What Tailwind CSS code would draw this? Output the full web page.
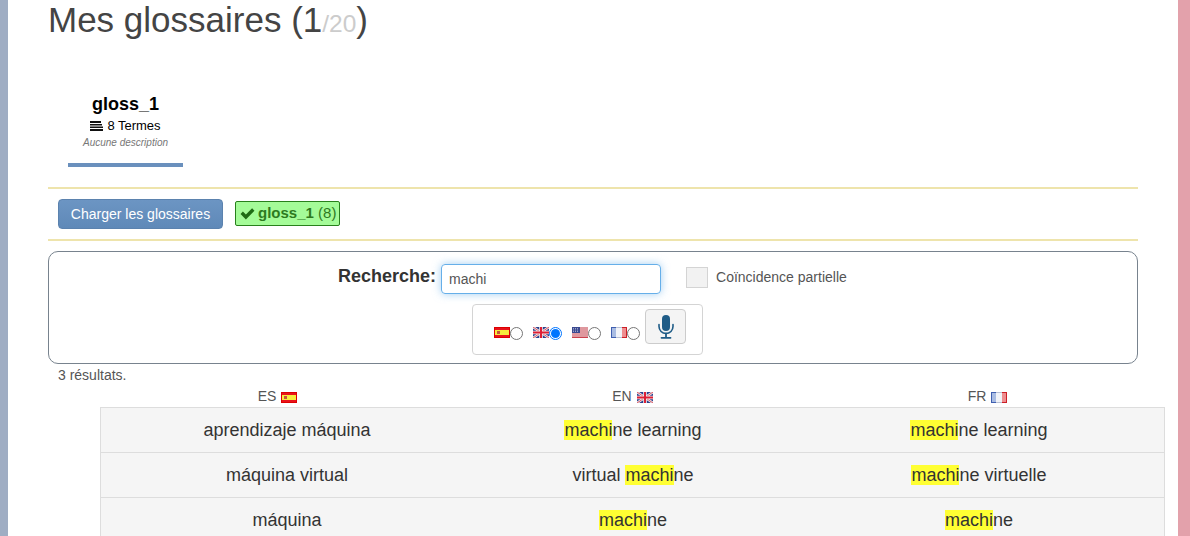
<!DOCTYPE html>
<html lang="fr">
<head>
    <meta charset="UTF-8">
    <title>Mes glossaires</title>
    <script src="https://cdn.jsdelivr.net/npm/@tailwindcss/browser@4"></script>
</head>
<body class="h-[536px] overflow-hidden bg-white font-['Liberation_Sans',Arial,sans-serif] text-[#333]">
    <svg class="hidden">
        <symbol id="flag-es" viewBox="0 0 16 11"><rect width="16" height="11" fill="#e8131b"/><rect y="3" width="16" height="5" fill="#f7ec3c"/><rect x="3" y="4" width="3" height="3" fill="#c8503c"/><rect x=".5" y=".5" width="15" height="10" fill="none" stroke="#d00" stroke-width="1"/></symbol>
        <symbol id="flag-gb" viewBox="0 0 16 11"><rect width="16" height="11" fill="#2b3f8c"/><path d="M0 0L16 11M16 0L0 11" stroke="#eee" stroke-width="2.4"/><path d="M0 0L16 11M16 0L0 11" stroke="#d8283c" stroke-width=".8"/><path d="M8 0V11M0 5.500H16" stroke="#eee" stroke-width="3.600"/><path d="M8 0V11M0 5.500H16" stroke="#dd1f35" stroke-width="2"/></symbol>
        <symbol id="flag-us" viewBox="0 0 16 11"><rect width="16" height="11" fill="#f4f0f0"/><path d="M0 1H16M0 3H16M0 5H16M0 7H16M0 9H16" stroke="#c9404c" stroke-width="1"/><path d="M0 10.500H16" stroke="#c9404c" stroke-width="1"/><rect width="8" height="6" fill="#3b4a90"/><path d="M1 1.500H7M1 3H7M1 4.500H7" stroke="#dde" stroke-width=".6" stroke-dasharray="1 1"/></symbol>
        <symbol id="flag-fr" viewBox="0 0 16 11"><rect width="16" height="11" fill="#f1f3f8"/><rect width="5" height="11" fill="#3f5fb0"/><rect x="1" y="1" width="4" height="9" fill="#a9bce2"/><rect x="11" width="5" height="11" fill="#cc1f27"/><rect x="11" y="1" width="4" height="9" fill="#ee8e90"/><path d="M5 .5H11M5 10.500H11" stroke="#b8c0d4" stroke-width="1"/></symbol>
    </svg>
    <div class="flex h-full">
        <div class="w-2 shrink-0 bg-[#9fadc3]"></div>
        <main class="relative w-[1170px] shrink-0 overflow-hidden pl-10 pr-10">
            <h1 class="mt-[-2px] h-[44px] text-[35px] leading-[44px] font-normal text-[#444]">Mes glossaires (1<span class="text-[24.5px] text-[#ccc]">/20</span>)</h1>

            <div class="mt-[52px] ml-5 flex h-[73px] w-[115px] flex-col items-center border-b-4 border-[#6a90bd]">
                <div class="text-[18px] leading-[20px] font-bold text-black">gloss_1</div>
                <div class="mt-[3px] flex items-center gap-1 text-[13px] leading-[17px] text-black">
                    <svg class="h-[10px] w-[13px]" viewBox="0 0 13 10"><path d="M0 0h11v2H0zM0 3h12v1.500H0zM0 5.500h13V7H0zM0 8h13v2H0z" fill="#111"/></svg>
                    8 Termes
                </div>
                <div class="mt-[3px] text-[10px] leading-[12px] text-[#777] italic">Aucune description</div>
            </div>

            <div class="mt-[20px] flex h-[54px] items-center border-y-2 border-[#eee4ac] pl-[10px]">
                <button class="h-[30px] w-[165px] rounded-[4px] border border-[#5b82ae] bg-gradient-to-b from-[#6c95c3] to-[#5f89b8] text-[14px] text-white">Charger les glossaires</button>
                <div class="mt-[-2px] ml-3 flex h-[25px] w-[105px] items-center rounded-[2px] border border-[#28801c] bg-[#a4fb98] pl-1 text-[15px] text-[#2d7a1f]">
                    <svg class="mr-[3px] h-[13px] w-[15px]" viewBox="0 0 14 12"><path d="M.5 6.500L2.700 4.200L5.500 7L11.300 1.200L13.500 3.500L5.500 11.500Z" fill="#1f6b14"/></svg>
                    <b>gloss_1</b>&nbsp;<span>(8)</span>
                </div>
            </div>

            <section class="mt-[10px] flex h-[113px] flex-col items-center rounded-[10px] border border-[#78838e] pt-3">
                <div class="relative flex h-[31px] items-start self-start pl-[289px]">
                    <label class="mt-[1px] text-[18px] leading-[22px] font-bold text-[#333]">Recherche:</label>
                    <input value="machi" class="ml-[5px] h-[30px] w-[220px] rounded-[4px] border border-[#66afe9] px-[7px] text-[14px] text-[#555] shadow-[0_0_8px_rgba(102,175,233,0.6)] outline-none">
                    <span class="mt-[3px] ml-[25px] h-[21px] w-[22px] border border-[#d4d4d4] bg-[#f2f2f2]"></span>
                    <span class="mt-[3px] ml-2 text-[14px] leading-[20px] text-[#555]">Coïncidence partielle</span>
                </div>
                <div class="mt-[9px] mr-[11px] flex h-[51px] w-[231px] items-center rounded-[4px] border border-[#d4d4d4] pl-[21px]">
                    <div class="mt-[5px] flex h-[13px] items-center">
                        <svg class="h-[11px] w-[16px]"><use href="#flag-es"/></svg>
                        <span class="mt-[2px] mr-[10px] h-[13px] w-[13px] rounded-full border border-[#767676] bg-white"></span>
                        <svg class="h-[11px] w-[16px]"><use href="#flag-gb"/></svg>
                        <span class="mt-[2px] mr-[10px] flex h-[13px] w-[13px] items-center justify-center rounded-full border border-[#0075ff] bg-white"><span class="h-[9px] w-[9px] rounded-full bg-[#0075ff]"></span></span>
                        <svg class="h-[11px] w-[16px]"><use href="#flag-us"/></svg>
                        <span class="mt-[2px] mr-[10px] h-[13px] w-[13px] rounded-full border border-[#767676] bg-white"></span>
                        <svg class="h-[11px] w-[16px]"><use href="#flag-fr"/></svg>
                        <span class="mt-[2px] h-[13px] w-[13px] rounded-full border border-[#767676] bg-white"></span>
                    </div>
                    <button class="mt-[-6px] ml-[5px] flex h-[35px] w-[41px] items-center justify-center rounded-[4px] border border-[#ccc] bg-[#f4f4f4]">
                        <svg class="h-[24px] w-[16px]" viewBox="0 0 16 24"><rect x="4" y="0" width="8" height="16" rx="4" fill="#1f5c87"/><path d="M1 9.500V11.500a7 7 0 0 0 14 0V9.500" fill="none" stroke="#1f5c87" stroke-width="1.600" stroke-linecap="round"/><path d="M8 18.500V22M3.500 22.800H12.500" fill="none" stroke="#1f5c87" stroke-width="1.800" stroke-linecap="round"/></svg>
                    </button>
                </div>
            </section>

            <p class="mt-[3px] pl-[10px] text-[14px] leading-[16px] text-[#555]">3 résultats.</p>

            <div class="mt-[2px] ml-[52px] grid h-[22px] w-[1065px] grid-cols-3 text-center text-[14px] leading-[20px] text-[#555]">
                <div class="flex items-center justify-center gap-[5px]">ES <svg class="mt-[3px] h-[11px] w-[16px]"><use href="#flag-es"/></svg></div>
                <div class="flex items-center justify-center gap-[5px]">EN <svg class="mt-[3px] h-[11px] w-[16px]"><use href="#flag-gb"/></svg></div>
                <div class="flex items-center justify-center gap-[5px]">FR <svg class="mt-[3px] h-[11px] w-[16px]"><use href="#flag-fr"/></svg></div>
            </div>

            <div class="ml-[52px] w-[1065px] border-x border-t border-[#ddd] bg-[#f5f5f5] text-center text-[18px] leading-[44px] text-[#333]">
                <div class="grid h-[45px] grid-cols-3 border-b border-[#ddd] pr-[12px] pl-[13px]">
                    <div>aprendizaje máquina</div>
                    <div><mark class="bg-[#ffff33] text-[#333]">machi</mark>ne learning</div>
                    <div><mark class="bg-[#ffff33] text-[#333]">machi</mark>ne learning</div>
                </div>
                <div class="grid h-[45px] grid-cols-3 border-b border-[#ddd] pr-[12px] pl-[13px]">
                    <div>máquina virtual</div>
                    <div>virtual <mark class="bg-[#ffff33] text-[#333]">machi</mark>ne</div>
                    <div><mark class="bg-[#ffff33] text-[#333]">machi</mark>ne virtuelle</div>
                </div>
                <div class="grid h-[45px] grid-cols-3 pr-[12px] pl-[13px]">
                    <div>máquina</div>
                    <div><mark class="bg-[#ffff33] text-[#333]">machi</mark>ne</div>
                    <div><mark class="bg-[#ffff33] text-[#333]">machi</mark>ne</div>
                </div>
            </div>
        </main>
        <div class="flex-1 bg-[#e3a1ab]"></div>
    </div>
</body>
</html>
